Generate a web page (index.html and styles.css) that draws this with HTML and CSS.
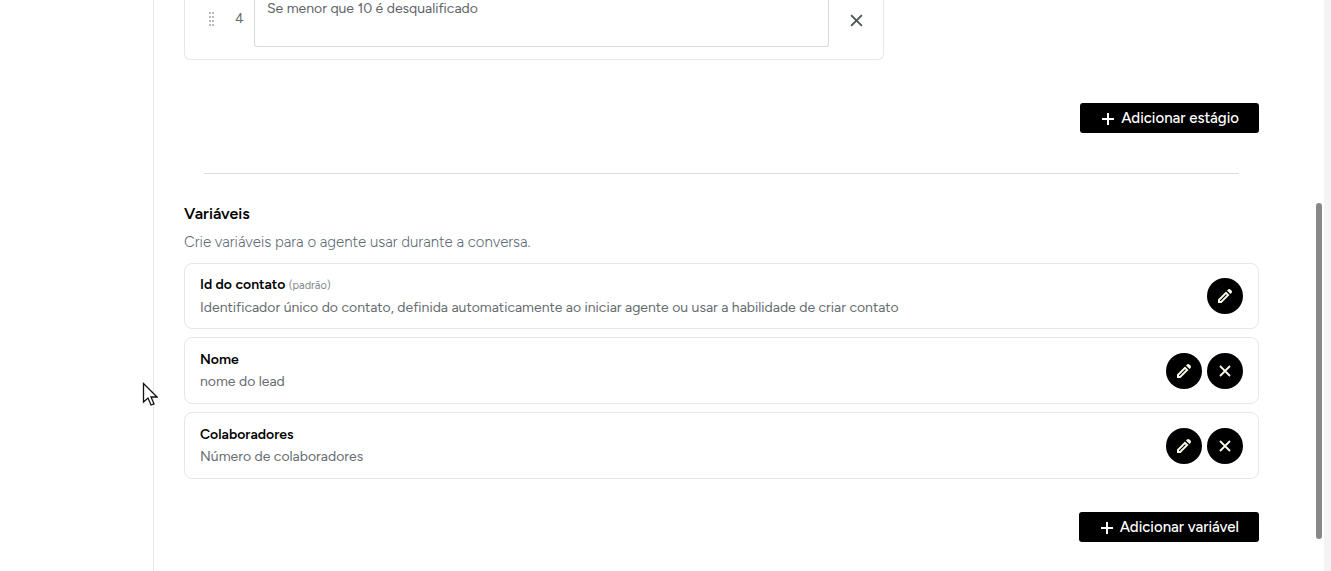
FILE: index.html
```html
<!DOCTYPE html>
<html lang="pt-BR">
<head>
<meta charset="utf-8">
<meta name="viewport" content="width=device-width, initial-scale=1">
<title>Variáveis</title>
<link rel="stylesheet" href="styles.css">
</head>
<body>
<svg class="symbols" aria-hidden="true">
  <symbol id="pencil" viewBox="0 0 16 16"><path fill="currentColor" fill-rule="evenodd" d="M1 15V11.500L9 3.500l3.500 3.500-8 8zM3 13h.8l6-6-.8-.8-6 6zM10 2.500l1-1q1.200-1.200 2.400 0l1.100 1.100q1.200 1.200 0 2.400l-1 1z"/></symbol>
  <symbol id="cross" viewBox="0 0 12 12"><path d="M1 1l10 10M11 1L1 11" fill="none" stroke="currentColor" stroke-width="1.800"/></symbol>
  <symbol id="plus" viewBox="0 0 12 12"><path d="M6 0v12M0 6h12" fill="none" stroke="currentColor" stroke-width="2"/></symbol>
</svg>
<div class="layout">
  <aside class="sidebar"></aside>
  <main class="content">
    <section class="stage-card">
      <svg class="grip" viewBox="0 0 6 16" aria-hidden="true"><path fill="#b6bbc2" d="M0 1h2v2H0zM3 1h2v2H3zM0 5h2v2H0zM3 5h2v2H3zM0 9h2v2H0zM3 9h2v2H3zM0 13h2v2H0zM3 13h2v2H3z"/></svg>
      <label class="stage-number" for="stage">4</label>
      <textarea class="stage-text" id="stage">Se menor que 10 é desqualificado</textarea>
      <button class="stage-remove" type="button" aria-label="Remover estágio"><svg class="remove-icon"><use href="#cross"/></svg></button>
    </section>
    <button class="add-button add-stage" type="button"><svg class="plus-icon"><use href="#plus"/></svg>Adicionar estágio</button>
    <hr class="divider">
    <h2 class="title">Variáveis</h2>
    <p class="subtitle">Crie variáveis para o agente usar durante a conversa.</p>
    <ul class="variables">
      <li class="variable variable-default">
        <div class="info"><h3 class="name">Id do contato <small class="tag">(padrão)</small></h3><p class="description">Identificador único do contato, definida automaticamente ao iniciar agente ou usar a habilidade de criar contato</p></div>
        <button class="round" type="button" aria-label="Editar Id do contato"><svg class="pencil-icon"><use href="#pencil"/></svg></button>
      </li>
      <li class="variable">
        <div class="info"><h3 class="name">Nome</h3><p class="description">nome do lead</p></div>
        <button class="round" type="button" aria-label="Editar Nome"><svg class="pencil-icon"><use href="#pencil"/></svg></button>
        <button class="round" type="button" aria-label="Remover Nome"><svg class="cross-icon"><use href="#cross"/></svg></button>
      </li>
      <li class="variable">
        <div class="info"><h3 class="name">Colaboradores</h3><p class="description">Número de colaboradores</p></div>
        <button class="round" type="button" aria-label="Editar Colaboradores"><svg class="pencil-icon"><use href="#pencil"/></svg></button>
        <button class="round" type="button" aria-label="Remover Colaboradores"><svg class="cross-icon"><use href="#cross"/></svg></button>
      </li>
    </ul>
    <button class="add-button add-variable" type="button"><svg class="plus-icon"><use href="#plus"/></svg>Adicionar variável</button>
  </main>
  <div class="gutter"><div class="thumb"></div></div>
</div>
<svg class="cursor" viewBox="0 0 16 25" aria-hidden="true"><path d="M1.500 1.500V20l4.500-4 3 7 3-1.200-3-6.800h6z" fill="#fff" stroke="#111" stroke-width="1.300"/></svg>
</body>
</html>
```
FILE: styles.css
```css
* { box-sizing: border-box; }
body {
  margin: 0;
  overflow: hidden;
  background: #fff;
  color: #000;
  font-family: Figtree, Inter, sans-serif;
  font-size: 14px;
}
button { border: 0; padding: 0; font: inherit; cursor: pointer; }
.symbols { position: absolute; width: 0; height: 0; }
.layout { display: grid; grid-template-columns: 153px 1fr 7px; min-height: 100vh; }
.content {
  display: flex;
  flex-direction: column;
  border-left: 1px solid #e5e5e5;
  padding: 0 65px 28px 30px;
}
.stage-card {
  display: flex;
  width: 100%;
  max-width: 700px;
  border: 1px solid #e5e7e9;
  border-top: 0;
  border-radius: 0 0 6px 6px;
  padding: 0 20px 12px 24px;
}
.grip { width: 6px; height: 16px; margin: 11px 17px 0 0; }
.stage-number { width: 22px; padding: 10px 0 0 3px; line-height: 18px; color: #666c70; }
.stage-text {
  flex: 1;
  height: 47px;
  border: 1px solid #d8dadd;
  border-top: 0;
  border-radius: 0 0 3px 3px;
  padding: 0 12px;
  background: #fff;
  color: #5f6467;
  font: 14px/17px Figtree, Inter, sans-serif;
  resize: none;
}
.stage-remove { width: 14px; height: 20px; margin: 10px 0 0 20px; background: none; color: #50565a; }
.remove-icon { display: block; width: 13px; height: 13px; margin: 0 auto; }
.add-button {
  display: flex;
  align-items: center;
  align-self: flex-end;
  gap: 7px;
  height: 30px;
  border-radius: 3px;
  padding: 0 20px 1px 22px;
  background: #000;
  color: #fff;
  font-size: 15px;
  font-weight: 500;
}
.add-stage { margin-top: 43px; }
.add-variable { margin-top: 33px; }
.plus-icon { width: 12px; height: 12px; margin-top: 3px; }
.divider { align-self: stretch; margin: 40px 20px 0; border: 0; border-top: 1px solid #dcdcdc; }
.title { margin: 29px 0 0; font-size: 16px; line-height: 22px; font-weight: 600; }
.subtitle { margin: 7px 0 11px; font-size: 15px; line-height: 20px; font-weight: 300; color: #5c6b74; }
.variables { display: grid; gap: 8px; margin: 0; padding: 0; list-style: none; }
.variable {
  display: flex;
  align-items: center;
  gap: 5px;
  min-height: 67px;
  border: 1px solid #e5e7e9;
  border-radius: 8px;
  padding: 8px 15px;
}
.variable-default { min-height: 66px; }
.info { flex: 1; }
.name { margin: 0; font-size: 14px; line-height: 22px; font-weight: 600; }
.tag { color: #858a8d; font-size: 11px; font-weight: 400; }
.description { margin: 0; line-height: 22px; color: #666c70; }
.round {
  display: grid;
  place-items: center;
  width: 36px;
  height: 36px;
  border-radius: 50%;
  background: #000;
  color: #fffbea;
}
.pencil-icon { width: 16px; height: 16px; }
.cross-icon { width: 12px; height: 12px; }
.gutter { position: relative; background: #f4f4f4; }
.thumb { position: absolute; top: 203px; right: 9px; width: 6px; height: 336px; border-radius: 3px; background: #888; }
.cursor { position: absolute; left: 142px; top: 382px; width: 16px; height: 25px; }
```
